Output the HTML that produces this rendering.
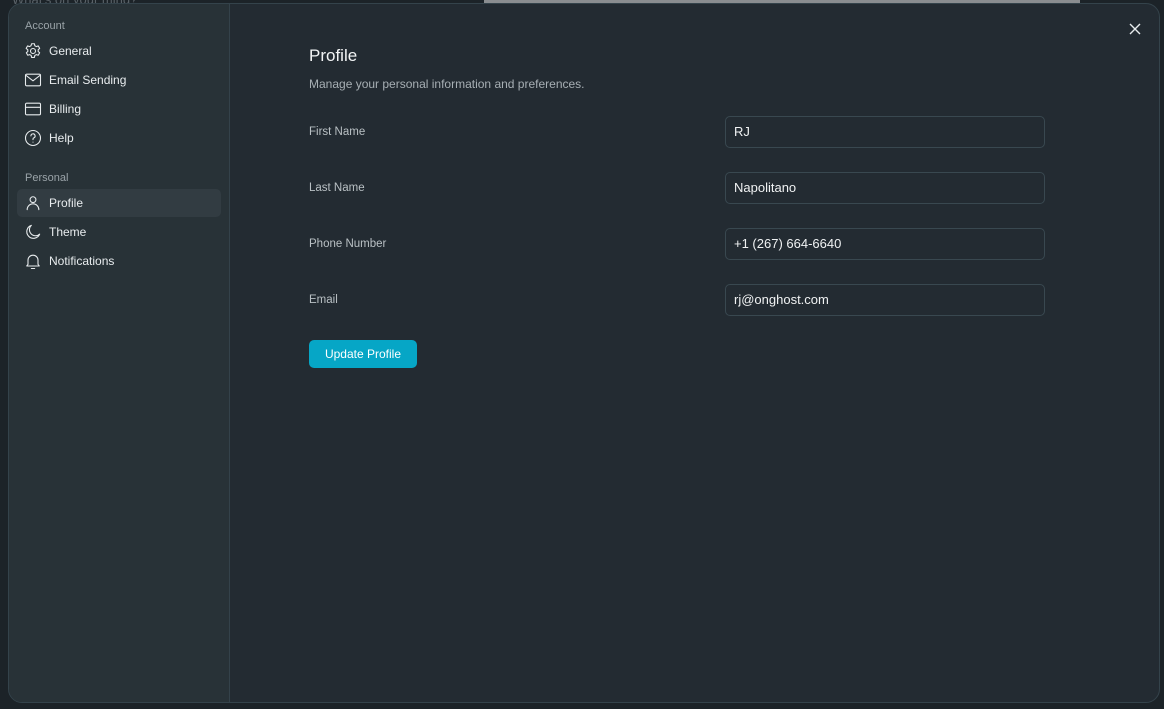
<!DOCTYPE html>
<html><head><meta charset="utf-8"><style>
*{box-sizing:border-box;margin:0;padding:0}
body{width:1164px;height:709px;background:#1c2328;font-family:"Liberation Sans",sans-serif;position:relative;overflow:hidden}
.topbar{position:absolute;left:484px;top:0;width:596px;height:3px;background:#8a8d90}
.ghost{position:absolute;left:12px;top:-8px;color:#5a6268;font-size:13px}
.modal{position:absolute;left:8px;top:3px;width:1152px;height:700px;background:#232b32;border:1px solid #34434b;border-radius:14px;overflow:hidden}
.side{position:absolute;left:0;top:0;width:221px;height:100%;background:#283237;border-right:1px solid #34424a}
.sec{position:absolute;left:16px;font-size:11px;color:#9aa3a8}
.item{position:absolute;left:8px;width:204px;height:28px;border-radius:5px;display:flex;align-items:center;padding-left:6px;color:#e8ecee;font-size:12px}
.item svg{width:20px;height:20px;margin-right:6px;fill:none;stroke:#e8ecee;stroke-width:1.3;stroke-linecap:round;stroke-linejoin:round}
.item.active{background:#323c42}
.h1{position:absolute;left:300px;top:42px;font-size:17px;color:#f2f4f5}
.sub{position:absolute;left:300px;top:73px;font-size:12px;color:#a7afb4}
.lbl{position:absolute;left:300px;font-size:11.5px;color:#b9c0c4}
.inp{position:absolute;left:716px;width:320px;height:32px;border:1px solid #394850;border-radius:5px;padding-left:8px;line-height:30px;font-size:13px;color:#f0f2f3}
.btn{position:absolute;left:300px;top:336px;width:108px;height:28px;border-radius:5px;background:#06a6c6;color:#fff;font-size:12px;text-align:center;line-height:28px}
.x{position:absolute;left:1119px;top:18px}
</style></head><body>
<div class="ghost">What's on your mind?</div>
<div class="topbar"></div>
<div class="modal">
<div class="side">
<div class="sec" style="top:16px">Account</div>
<div class="item" style="top:33px"><svg viewBox="0 0 24 24"><circle cx="12" cy="12" r="3"/><path d="M10.3 3.3h3.4l.5 2.4 1.8 1 2.3-.8 1.7 3-1.8 1.6v2l1.8 1.6-1.7 3-2.3-.8-1.8 1-.5 2.4h-3.4l-.5-2.4-1.8-1-2.3.8-1.7-3 1.8-1.6v-2L3.8 8.9l1.7-3 2.3.8 1.8-1z"/></svg>General</div>
<div class="item" style="top:62px"><svg viewBox="0 0 24 24"><rect x="3" y="5" width="18" height="14" rx="1.5"/><path d="M3 6l9 7 9-7"/></svg>Email Sending</div>
<div class="item" style="top:91px"><svg viewBox="0 0 24 24"><rect x="3" y="5" width="18" height="14" rx="1.5"/><path d="M3 10h18"/></svg>Billing</div>
<div class="item" style="top:120px"><svg viewBox="0 0 24 24"><circle cx="12" cy="12" r="9"/><path d="M9.5 9.5a2.5 2.5 0 1 1 3.5 2.3c-.7.3-1 .8-1 1.5V14"/><path d="M12 17h.01"/></svg>Help</div>
<div class="sec" style="top:168px">Personal</div>
<div class="item active" style="top:185px"><svg viewBox="0 0 24 24"><circle cx="12" cy="8" r="3.5"/><path d="M5 20a7 7 0 0 1 14 0"/></svg>Profile</div>
<div class="item" style="top:214px"><svg viewBox="0 0 24 24"><path d="M20 14.5A8 8 0 1 1 10 4a6.5 6.5 0 0 0 10 10.5z"/></svg>Theme</div>
<div class="item" style="top:243px"><svg viewBox="0 0 24 24"><path d="M6 16V11a6 6 0 0 1 12 0v5l1.5 2h-15z"/><path d="M10 21h4"/></svg>Notifications</div>
</div>
<svg class="x" width="14" height="14" viewBox="0 0 14 14" stroke="#e8ecee" stroke-width="1.4"><path d="M2 2l10 10M12 2L2 12"/></svg>
<div class="h1">Profile</div>
<div class="sub">Manage your personal information and preferences.</div>
<div class="lbl" style="top:122px">First Name</div>
<div class="inp" style="top:112px">RJ</div>
<div class="lbl" style="top:178px">Last Name</div>
<div class="inp" style="top:168px">Napolitano</div>
<div class="lbl" style="top:234px">Phone Number</div>
<div class="inp" style="top:224px">+1 (267) 664-6640</div>
<div class="lbl" style="top:290px">Email</div>
<div class="inp" style="top:280px">rj@onghost.com</div>
<div class="btn">Update Profile</div>
</div>
</body></html>
